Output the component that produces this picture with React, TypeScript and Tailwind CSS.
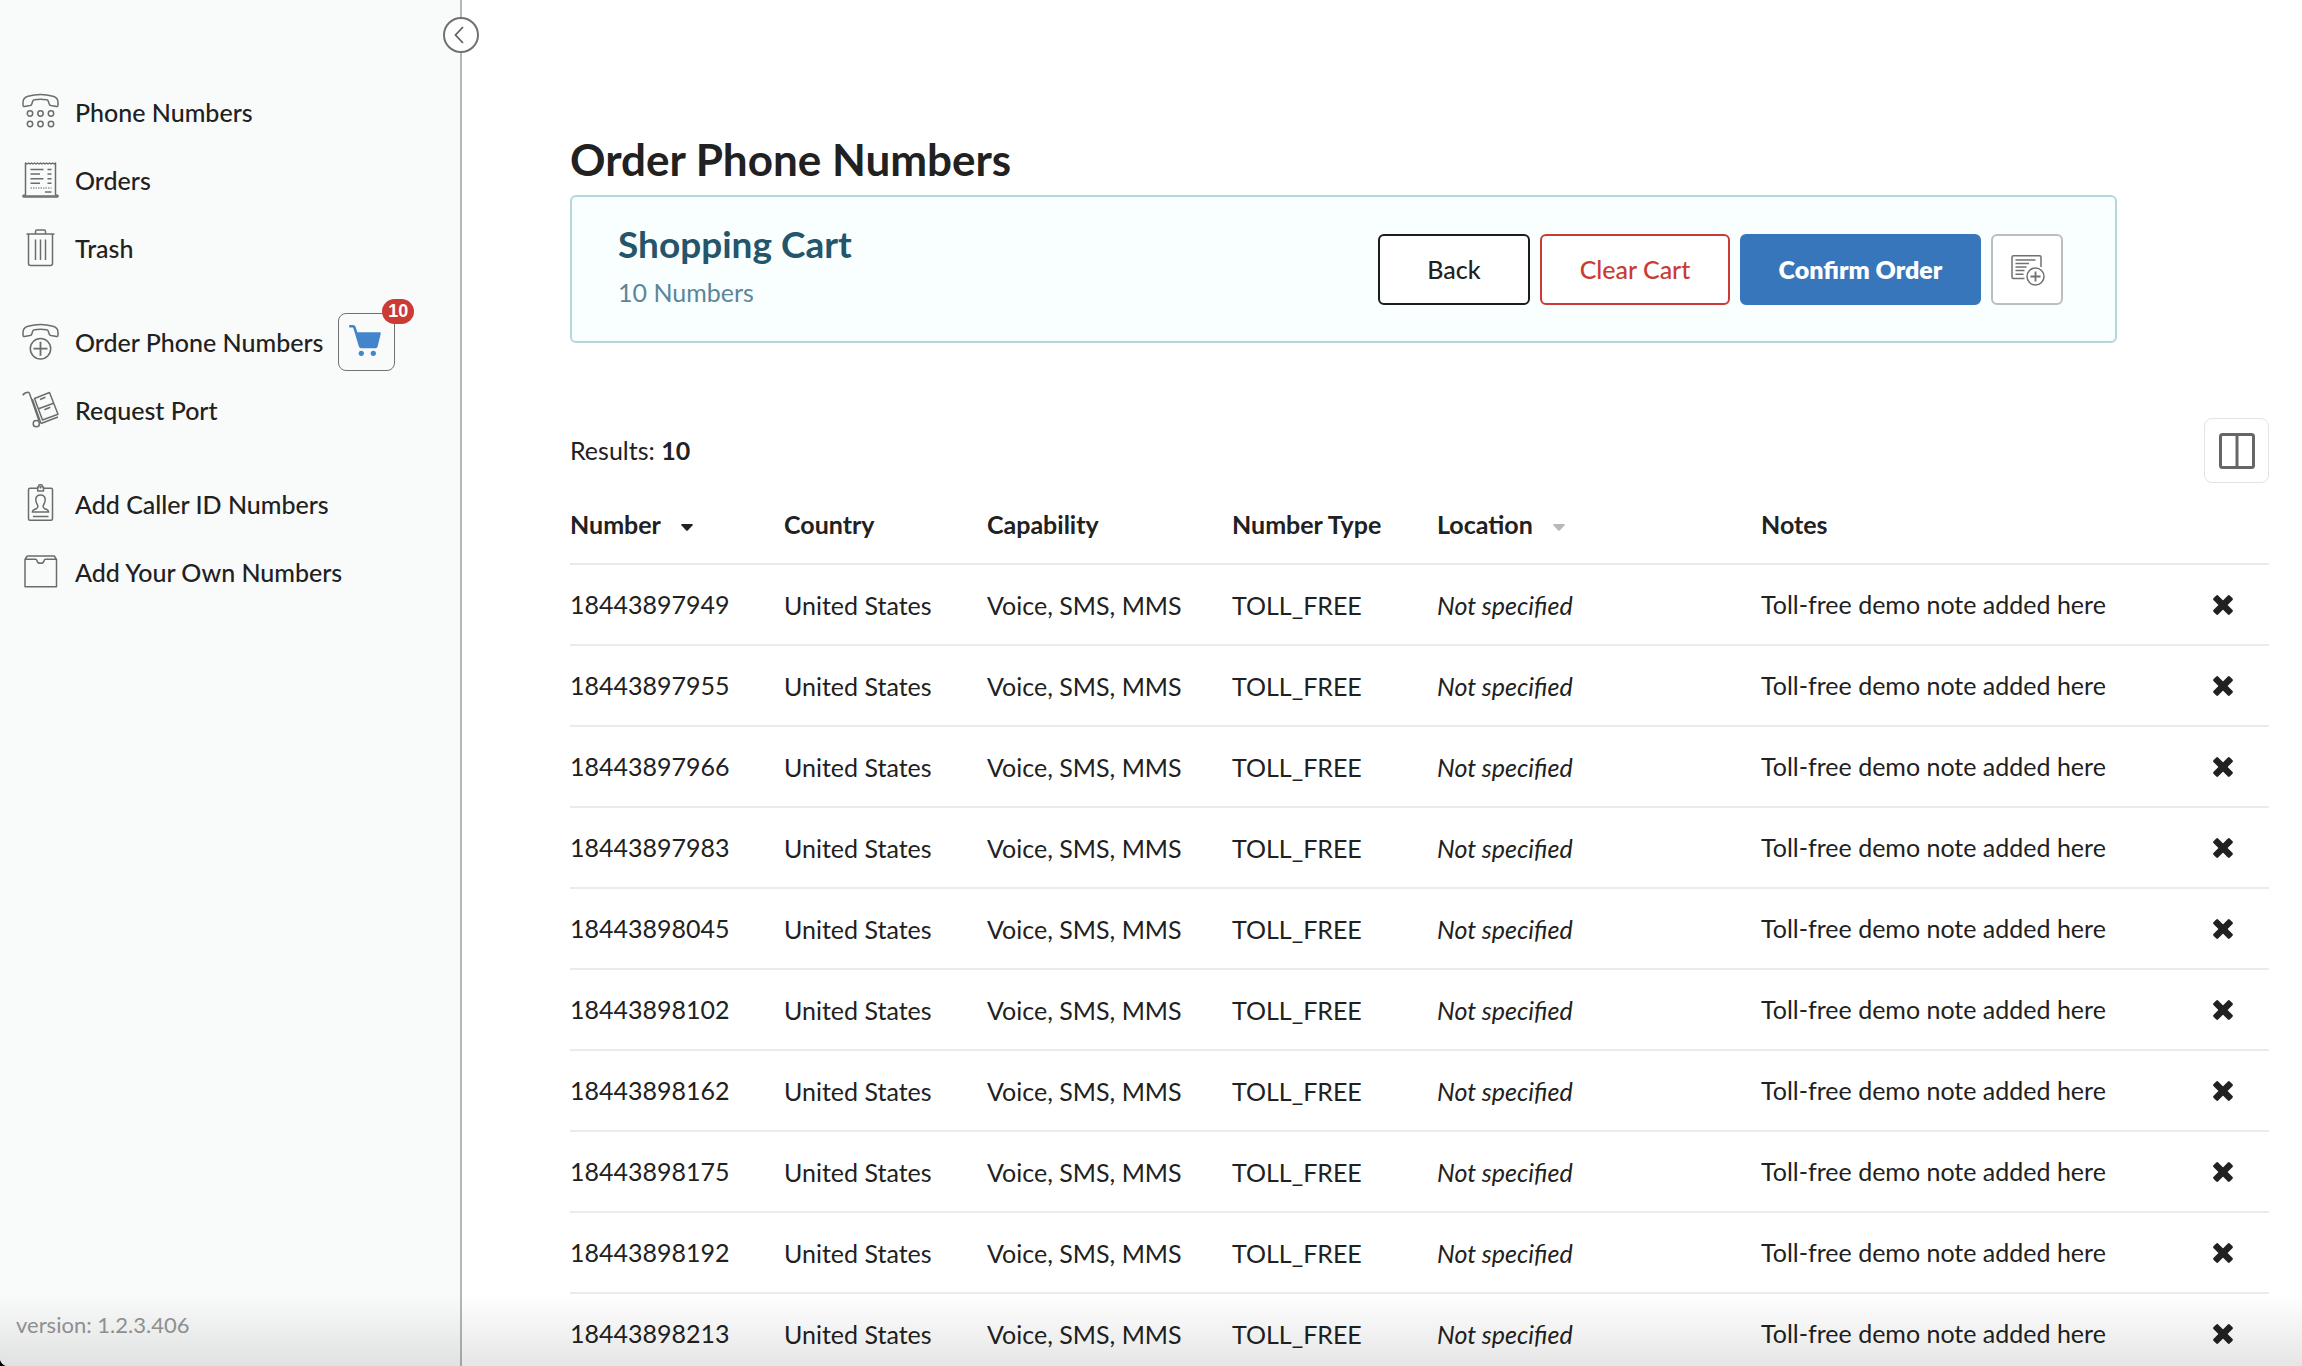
import { ReactNode } from "react";
import clsx from "clsx";

const numbers = [
  "18443897949",
  "18443897955",
  "18443897966",
  "18443897983",
  "18443898045",
  "18443898102",
  "18443898162",
  "18443898175",
  "18443898192",
  "18443898213",
];

function Icon({ children }: { children: ReactNode }) {
  return (
    <svg
      viewBox="0 0 36 36"
      className="w-9 h-9 shrink-0 overflow-visible"
      fill="none"
      stroke="#6b6c6c"
      strokeWidth="1.5"
      strokeLinejoin="round"
      aria-hidden="true"
    >
      {children}
    </svg>
  );
}

const handset =
  "M1 8.5c0-3.2 1.8-5.4 5-6.3C13.5.3 23.5.3 31 2.2c3.2.9 5 3.1 5 6.3V11c0 1-.5 1.6-1.5 1.5l-5.5-.9c-1-.2-1.5-.6-1.8-1.6l-.9-2.7c-.3-.9-.8-1.4-1.7-1.5-4-.7-8.2-.7-12.2 0-.9.1-1.4.6-1.7 1.5L9.8 10c-.3 1-.8 1.4-1.8 1.6l-5.5.9C1.5 12.6 1 12 1 11z";

function PhoneIcon() {
  return (
    <Icon>
      <path d={handset} />
      {[8, 18.5, 29].map((x) => (
        <g key={x}>
          <circle cx={x} cy="19.5" r="2.7" />
          <circle cx={x} cy="30" r="2.7" />
        </g>
      ))}
    </Icon>
  );
}

function OrdersIcon() {
  return (
    <Icon>
      <path d="M3.5 33V1l1.5 1 1.5-1L8 2l1.5-1L11 2l1.5-1L14 2l1.5-1L17 2l1.5-1L20 2l1.5-1L23 2l1.5-1L26 2l1.5-1L29 2l1.5-1L32 2l1.5-1v32" />
      <path d="M3.5 33.2h-2c-.7 0-.8 1.8 0 1.8h34c.8 0 .7-1.8 0-1.8h-2" />
      <path d="M2 34h33" />
      <path d="M8.5 7.5h13M8.5 12H18M8.5 16.7h13M8.5 21.3H18M25.5 7.5h4M25.5 12h4M25.5 16.7h4M25.5 21.3h4M23 30h6.5" />
      <path d="M8.5 26h21" strokeDasharray="1.5 1" strokeWidth="1" />
    </Icon>
  );
}

function TrashIcon() {
  return (
    <Icon>
      <path d="M4.5 4h28M13.5 4V1.5Q13.5 0 15 0h7q1.5 0 1.5 1.5V4" />
      <path d="M6.5 4v29.5q0 2 2 2h20q2 0 2-2V4M13.5 9.5V30M18.5 9.5V30M23.5 9.5V30" />
    </Icon>
  );
}

function OrderPhoneIcon() {
  return (
    <Icon>
      <path d={handset} />
      <circle cx="18.5" cy="24.7" r="10.2" />
      <path d="M11.5 24.7h14M18.5 17.7v14" strokeWidth="1.8" />
    </Icon>
  );
}

function PortIcon() {
  return (
    <Icon>
      <path d="M.7 3.3C2 1.5 4 .3 6.3.3c.7 0 1 .5 1.2 1.2L17 28.8M19 31.5 36 25" />
      <path d="M12.5 6.5 27.5.5 36 22.3 20.5 28zM10.3 7 19 31.5M16.6 16.8l15-5.6M18 7.5l5.5-2.2M22.3 17.7l6-2.4" />
      <circle cx="14.3" cy="31.7" r="3.1" />
    </Icon>
  );
}

function CallerIdIcon() {
  return (
    <Icon>
      <path d="M15.7 2.3H8q-1.5 0-1.5 1.5v29q0 1.5 1.5 1.5h21q1.5 0 1.5-1.5v-29q0-1.5-1.5-1.5h-7.5" />
      <path d="M15.7 5V1h1V-.3q0-1 1-1h1.6q1 0 1 1V1h1.2v4zM18.5 0v2.5" />
      <path d="M18.5 9c-3 0-4.7 2-4.7 4.8 0 2.7 1.2 4 1.9 5.7.5 1.5-.2 2.6-1.5 3.2-2 .9-3.7 1.3-3.9 3.3h16.4c-.2-2-1.9-2.4-3.9-3.3-1.3-.6-2-1.7-1.5-3.2.7-1.7 1.9-3 1.9-5.7C23.2 11 21.5 9 18.5 9zM11 30.5h15.5" />
    </Icon>
  );
}

function BoxIcon() {
  return (
    <Icon>
      <path d="M3 5.3h10.5q1.2 0 1.3 1c.8 4 6.6 4 7.4 0q.1-1 1.3-1h11v27.5H3zM3 5.3 5.3 2h27l2.2 3.3" />
    </Icon>
  );
}

function NavItem({
  icon,
  label,
  className,
  children,
}: {
  icon: ReactNode;
  label: string;
  className?: string;
  children?: ReactNode;
}) {
  return (
    <li className={clsx("flex items-center h-17", className)}>
      <a href="#" className="flex items-center gap-[17px]">
        {icon}
        <span className="font-medium">{label}</span>
      </a>
      {children}
    </li>
  );
}

function Sidebar() {
  return (
    <aside className="relative flex flex-col justify-between w-[462px] shrink-0 bg-[#f9fafa] border-r-2 border-[#b3b6b6]">
      <button
        aria-label="Collapse menu"
        className="absolute top-[17px] -right-[19px] w-9 h-9 rounded-full bg-white border-2 border-[#707171] flex items-center justify-center"
      >
        <svg viewBox="0 0 10 18" className="w-2.5 h-[18px] -ml-1" fill="none" stroke="#606161" strokeWidth="1.8">
          <path d="M9 1 1.5 9 9 17" />
        </svg>
      </button>

      <nav className="pt-[78px] pl-[22px]">
        <ul>
          <NavItem icon={<PhoneIcon />} label="Phone Numbers" />
          <NavItem icon={<OrdersIcon />} label="Orders" />
          <NavItem icon={<TrashIcon />} label="Trash" />
          <NavItem icon={<OrderPhoneIcon />} label="Order Phone Numbers" className="mt-[26px]">
            <button
              aria-label="Shopping cart"
              className="relative ml-[15px] w-[57px] h-[58px] rounded-lg border border-[#707171] flex items-center justify-center"
            >
              <svg viewBox="0 0 32 31" className="w-8 h-[31px] -mt-1 -ml-1" fill="#4285cc">
                <path d="M1.2 0h2.6c1.7 0 2.5.8 3 2.4l1.6 4.9h22.2c1 0 1.3.6 1.1 1.5l-3 12.4c-.3 1.3-1 2-2.3 2H12.2c-1.3 0-2-.6-2.4-1.9L4.6 4c-.3-1-.6-1.5-1.6-1.5H1.2C-.4 2.5-.4 0 1.2 0z" />
                <circle cx="12.3" cy="28.3" r="2.6" />
                <circle cx="24.3" cy="28.3" r="2.6" />
              </svg>
              <span className="absolute -top-[15px] -right-5 w-8 h-[25px] rounded-full bg-[#cb3a34] text-white text-[18px] leading-[25px] font-bold text-center font-['Liberation_Sans',sans-serif]">
                10
              </span>
            </button>
          </NavItem>
          <NavItem icon={<PortIcon />} label="Request Port" />
          <NavItem icon={<CallerIdIcon />} label="Add Caller ID Numbers" className="mt-[26px]" />
          <NavItem icon={<BoxIcon />} label="Add Your Own Numbers" />
        </ul>
      </nav>

      <p className="pl-4 pb-[25px] text-[22px] leading-8 text-[#959696]">version: 1.2.3.406</p>
    </aside>
  );
}

function CartCard() {
  const button = "h-[71px] rounded-md border-2 flex items-center justify-center";

  return (
    <section className="mr-[152px] h-[148px] pl-[46px] pr-[52px] flex items-center justify-between rounded-md border-2 border-[#b2d7dd] bg-[#f9ffff]">
      <div className="pb-0.5">
        <h2 className="text-[37px] leading-12 font-bold text-[#24556b]">Shopping Cart</h2>
        <p className="leading-12 text-[#5b8699]">10 Numbers</p>
      </div>
      <div className="flex gap-2.5">
        <button className={clsx(button, "w-[152px] bg-white border-[#1b1c1d] font-medium")}>Back</button>
        <button className={clsx(button, "w-[190px] bg-white border-[#cb3a34] text-[#cb3a34] font-medium")}>
          Clear Cart
        </button>
        <button className={clsx(button, "w-[241px] bg-[#3876bc] border-[#3876bc] text-white font-extrabold")}>
          Confirm Order
        </button>
        <button aria-label="Add note" className={clsx(button, "w-[72px] bg-white border-[#babebe]")}>
          <svg viewBox="0 0 34 31" className="w-[34px] h-[31px] mt-0.5 ml-0.5" fill="none" stroke="#707171" strokeWidth="1.5">
            <path d="M13.5 23.5h-11Q1 23.5 1 22V2.3Q1 .8 2.5.8h26q1.5 0 1.5 1.5V12" />
            <path d="M4.5 5h20M4.5 8.5H18M4.5 12h11M4.5 15.6h9M4.5 19.3h8" />
            <circle cx="24.5" cy="21.5" r="8.5" />
            <path d="M19.5 21.5h10M24.5 16.5v10" strokeWidth="1.8" />
          </svg>
        </button>
      </div>
    </section>
  );
}

function Caret({ className }: { className: string }) {
  return (
    <svg viewBox="0 0 12 7" className={clsx("w-3 h-[7px] mt-2", className)} fill="currentColor" aria-hidden="true">
      <path d="M1 0h10q1.2.2.6 1.2L7 6.3q-1 1-2 0L.4 1.2Q-.2.2 1 0z" />
    </svg>
  );
}

function NumbersTable() {
  return (
    <table className="w-full table-fixed border-collapse text-left">
      <thead>
        <tr className="h-20 border-b-2 border-[#e9e9e9]">
          <th className="w-[214px] p-0">
            <button className="flex items-center gap-5 font-bold">
              Number
              <Caret className="text-[#212121]" />
            </button>
          </th>
          <th className="w-[203px] p-0">Country</th>
          <th className="w-[245px] p-0">Capability</th>
          <th className="w-[205px] p-0">Number Type</th>
          <th className="w-[324px] p-0">
            <button className="flex items-center gap-5 font-bold">
              Location
              <Caret className="text-[#b8b8b8]" />
            </button>
          </th>
          <th className="p-0">Notes</th>
          <th className="w-[93px] p-0" />
        </tr>
      </thead>
      <tbody>
        {numbers.map((number) => (
          <tr key={number} className="h-[81px] border-b-2 border-[#ebebeb]">
            <td className="p-0 pb-0.5">{number}</td>
            <td className="p-0">United States</td>
            <td className="p-0">Voice, SMS, MMS</td>
            <td className="p-0">TOLL_FREE</td>
            <td className="p-0 italic">Not specified</td>
            <td className="p-0 pb-0.5">Toll-free demo note added here</td>
            <td className="p-0">
              <button aria-label={`Remove ${number}`} className="block mx-auto">
                <svg viewBox="0 0 20 20" className="w-5 h-5" fill="#212121">
                  <rect x="-1.5" y="6.7" width="23" height="6.6" rx="1.6" transform="rotate(45 10 10)" />
                  <rect x="-1.5" y="6.7" width="23" height="6.6" rx="1.6" transform="rotate(-45 10 10)" />
                </svg>
              </button>
            </td>
          </tr>
        ))}
      </tbody>
    </table>
  );
}

export default function App() {
  return (
    <div className="h-screen overflow-hidden bg-black">
      <div className="relative flex h-full overflow-hidden rounded-bl-lg bg-white font-['Lato',sans-serif] text-[25px] leading-8 text-[#212121]">
        <Sidebar />
        <main className="flex-1 min-w-0 pt-[123px] pl-[108px] pr-[33px]">
          <h1 className="text-[44px] leading-[72px] font-bold">Order Phone Numbers</h1>
          <CartCard />
          <div className="mt-[75px] mb-px flex items-center justify-between">
            <p className="pb-0.5">
              Results: <strong className="font-bold">10</strong>
            </p>
            <button
              aria-label="Choose columns"
              className="w-[65px] h-[65px] rounded-lg border border-[#e3e3e3] flex items-center justify-center"
            >
              <svg viewBox="0 0 36 36" className="w-9 h-9" fill="none" stroke="#666" strokeWidth="3">
                <rect x="1.5" y="1.5" width="33" height="33" rx="2" />
                <path d="M18 2v32" />
              </svg>
            </button>
          </div>
          <NumbersTable />
        </main>
        <div className="absolute inset-x-0 bottom-0 h-[72px] bg-linear-to-b from-transparent to-black/10 pointer-events-none" />
      </div>
    </div>
  );
}
